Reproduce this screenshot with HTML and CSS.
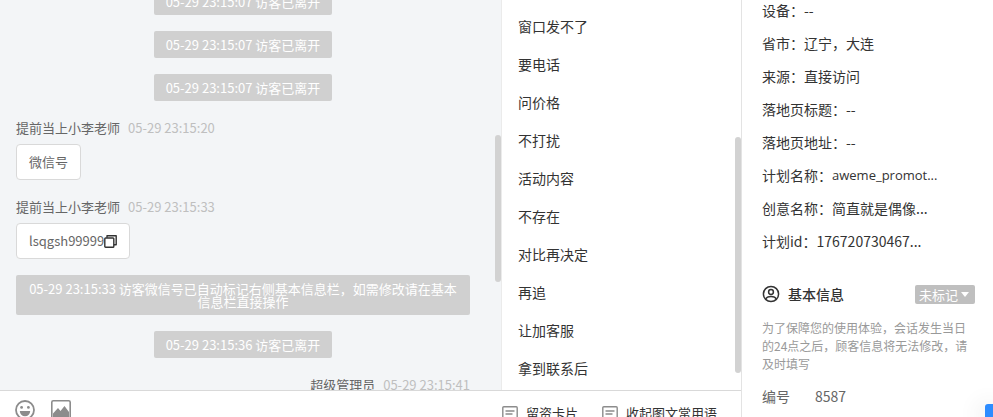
FILE: index.html
```html
<!DOCTYPE html>
<html lang="zh-CN">
<head>
  <meta charset="UTF-8" />
  <title>客服会话</title>
  <link rel="stylesheet" href="styles.css">
</head>
<body>
  <div class="app">
    <main class="workspace">
      <div class="panels">
        <section class="chat">
          <div class="chat-list">
            <div class="notice">05-29 23:15:07 访客已离开</div>
            <div class="notice">05-29 23:15:07 访客已离开</div>
            <div class="notice">05-29 23:15:07 访客已离开</div>
            <div class="message">
              <div class="message-head"><span class="name">提前当上小李老师</span><time>05-29 23:15:20</time></div>
              <div class="bubble">微信号</div>
            </div>
            <div class="message">
              <div class="message-head"><span class="name">提前当上小李老师</span><time>05-29 23:15:33</time></div>
              <div class="bubble">lsqgsh99999<button class="copy-btn" aria-label="复制">
                <svg width="13" height="13" viewBox="0 0 13 13" fill="none" stroke="#333" stroke-width="1.4" stroke-linejoin="round"><rect x="0.8" y="3" width="9" height="9.2" rx="0.8"/><path d="M3 2.8V0.8H12.2V9.8H10"/></svg>
              </button></div>
            </div>
            <div class="notice">05-29 23:15:33 访客微信号已自动标记右侧基本信息栏，如需修改请在基本信息栏直接操作</div>
            <div class="notice">05-29 23:15:36 访客已离开</div>
            <div class="message mine">
              <div class="message-head"><span class="name">超级管理员</span><time>05-29 23:15:41</time></div>
            </div>
          </div>
          <div class="thumb chat-thumb"></div>
        </section>

        <section class="phrases">
          <ul class="phrase-list">
            <li><button>窗口发不了</button></li>
            <li><button>要电话</button></li>
            <li><button>问价格</button></li>
            <li><button>不打扰</button></li>
            <li><button>活动内容</button></li>
            <li><button>不存在</button></li>
            <li><button>对比再决定</button></li>
            <li><button>再追</button></li>
            <li><button>让加客服</button></li>
            <li><button>拿到联系后</button></li>
          </ul>
          <div class="thumb phrase-thumb"></div>
        </section>
      </div>

      <div class="toolbar">
        <div class="tools">
          <button aria-label="表情">
            <svg width="20" height="20" viewBox="0 0 20 20"><circle cx="10" cy="10" r="9" fill="none" stroke="#8c8c8c" stroke-width="1.8"/><circle cx="6.6" cy="7.4" r="1.4" fill="#8c8c8c"/><circle cx="13.4" cy="7.4" r="1.4" fill="#8c8c8c"/><path d="M4.8 11H15.2A5.2 5.2 0 0 1 4.8 11Z" fill="#8c8c8c"/></svg>
          </button>
          <button aria-label="图片">
            <svg width="20" height="20" viewBox="0 0 20 20"><rect x="0.8" y="0.8" width="18.4" height="18.4" rx="1.5" fill="none" stroke="#8c8c8c" stroke-width="1.6"/><path d="M2 13.5L7 8L9.5 11L13.5 6L18 12V18H2Z" fill="#8c8c8c"/></svg>
          </button>
        </div>
        <div class="actions">
          <button>
            <svg width="16" height="16" viewBox="0 0 16 16" fill="none" stroke="#8c8c8c" stroke-width="1.4"><rect x="0.8" y="0.8" width="14.4" height="14.4" rx="1"/><path d="M3.5 5H12.5M3.5 8H10.5"/></svg>
            留资卡片
          </button>
          <button>
            <svg width="16" height="16" viewBox="0 0 16 16" fill="none" stroke="#8c8c8c" stroke-width="1.4"><rect x="0.8" y="0.8" width="14.4" height="14.4" rx="1"/><path d="M3.5 5H12.5M3.5 8H10.5"/></svg>
            收起图文常用语
          </button>
        </div>
      </div>
    </main>

    <aside class="visitor">
      <dl class="visit-info">
        <div><dt>设备：</dt><dd>--</dd></div>
        <div><dt>省市：</dt><dd>辽宁，大连</dd></div>
        <div><dt>来源：</dt><dd>直接访问</dd></div>
        <div><dt>落地页标题：</dt><dd>--</dd></div>
        <div><dt>落地页地址：</dt><dd>--</dd></div>
        <div><dt>计划名称：</dt><dd class="plan">aweme_promot...</dd></div>
        <div><dt>创意名称：</dt><dd>简直就是偶像...</dd></div>
        <div><dt>计划id：</dt><dd>176720730467...</dd></div>
      </dl>
      <div class="section-head">
        <svg width="18" height="18" viewBox="0 0 18 18" fill="none" stroke="#333" stroke-width="1.5"><circle cx="9" cy="9" r="7.6"/><circle cx="9" cy="7" r="2.4"/><path d="M3.8 14.2C4.6 12 6.5 11.6 9 11.6S13.4 12 14.2 14.2"/></svg>
        <h2>基本信息</h2>
        <button class="tag">未标记<span class="caret"></span></button>
      </div>
      <p class="hint">为了保障您的使用体验，会话发生当日的24点之后，顾客信息将无法修改，请及时填写</p>
      <dl class="basic-info">
        <dt>编号</dt><dd>8587</dd>
      </dl>
    </aside>
  </div>
  <button class="float-btn" aria-label="在线咨询"></button>
</body>
</html>
```

FILE: styles.css
```css
* {
  box-sizing: border-box;
}

body {
  margin: 0;
  font-family: "Noto Sans CJK SC", sans-serif;
  font-size: 14px;
  color: #333;
  background: #fff;
}

button {
  padding: 0;
  border: none;
  background: none;
  font: inherit;
  color: inherit;
  cursor: pointer;
}

svg {
  display: block;
  flex: none;
}

.app {
  display: flex;
  height: 100vh;
  overflow: hidden;
}

.workspace {
  flex: 1;
  min-width: 0;
  display: flex;
  flex-direction: column;
  border-right: 1px solid #e3e3e3;
}

.panels {
  flex: 1;
  min-height: 0;
  display: flex;
}

/* chat */
.chat {
  position: relative;
  flex: 1;
  min-width: 0;
  overflow: hidden;
  background: #f3f5f7;
}

.chat-list {
  display: flex;
  flex-direction: column;
  align-items: center;
  gap: 16px;
  margin-top: -12px;
  padding: 0 31px 0 16px;
  font-size: 13px;
}

.notice {
  padding: 7px 12px;
  border-radius: 2px;
  background: #d0d0d0;
  color: #fff;
  line-height: 13px;
  text-align: center;
}

.message {
  align-self: flex-start;
  display: flex;
  flex-direction: column;
  align-items: flex-start;
  gap: 5px;
  color: #666;
}

.mine {
  align-self: flex-end;
}

.message-head {
  display: flex;
  gap: 8px;
  line-height: 22px;
}

.message-head time {
  color: #bfbfbf;
}

.bubble {
  display: flex;
  align-items: center;
  padding: 8px 12px;
  border: 1px solid #d9d9d9;
  border-radius: 4px;
  background: #fff;
  line-height: 18px;
}

.thumb {
  position: absolute;
  right: 0;
  width: 6px;
  border-radius: 3px;
  background: #d2d2d2;
}

.chat-thumb {
  top: 135px;
  height: 147px;
}

.phrase-thumb {
  top: 137px;
  height: 236px;
}

/* quick phrases */
.phrases {
  position: relative;
  flex: none;
  width: 240px;
  overflow: hidden;
  border-left: 1px solid #ebebeb;
}

.phrase-list {
  margin: 0;
  padding: 7px 16px;
  list-style: none;
}

.phrase-list button {
  display: block;
  width: 100%;
  line-height: 38px;
  text-align: left;
}

/* bottom toolbar */
.toolbar {
  flex: none;
  display: flex;
  justify-content: space-between;
  height: 27px;
  padding: 0 24px 0 15px;
  border-top: 1px solid #d9d9d9;
}

.tools {
  display: flex;
  gap: 16px;
  padding-top: 9px;
}

.actions {
  display: flex;
  gap: 24px;
  padding-top: 13px;
  font-size: 13px;
  line-height: 18px;
}

.tools button,
.actions button {
  display: flex;
  align-items: center;
  align-self: flex-start;
  gap: 8px;
}

.actions button {
  align-items: flex-end;
}

/* visitor panel */
.visitor {
  flex: none;
  width: 251px;
  margin-top: -1px;
  padding: 0 18px 0 20px;
}

.visit-info {
  display: flex;
  flex-direction: column;
  gap: 11px;
  margin: 0;
  line-height: 22px;
}

.visit-info div {
  display: flex;
}

.plan {
  font-family: "Open Sans", sans-serif;
  font-size: 13px;
}

dd {
  margin: 0;
}

.section-head {
  display: flex;
  align-items: center;
  gap: 8px;
  margin-top: 31px;
  line-height: 22px;
}

.section-head h2 {
  flex: 1;
  margin: 0;
  font-size: 14px;
  font-weight: 500;
}

.tag {
  display: flex;
  align-items: center;
  gap: 3px;
  padding: 0 6px 0 4px;
  border-radius: 2px;
  background: #bfbfbf;
  color: #fff;
  font-size: 13px;
  line-height: 19px;
}

.caret {
  border: 4px solid transparent;
  border-top: 5px solid #fff;
  border-bottom: 0;
}

.hint {
  margin: 14px 0 12px;
  color: #999;
  font-size: 12px;
  line-height: 18px;
}

.basic-info {
  display: flex;
  gap: 25px;
  margin: 0;
  color: #666;
  line-height: 22px;
}

.float-btn {
  position: fixed;
  right: 0;
  bottom: 0;
  width: 8px;
  height: 13px;
  border-radius: 3px 0 0 0;
  background: #2d8cff;
  box-shadow: 0 4px 24px rgba(0, 0, 0, 0.3);
}
```
